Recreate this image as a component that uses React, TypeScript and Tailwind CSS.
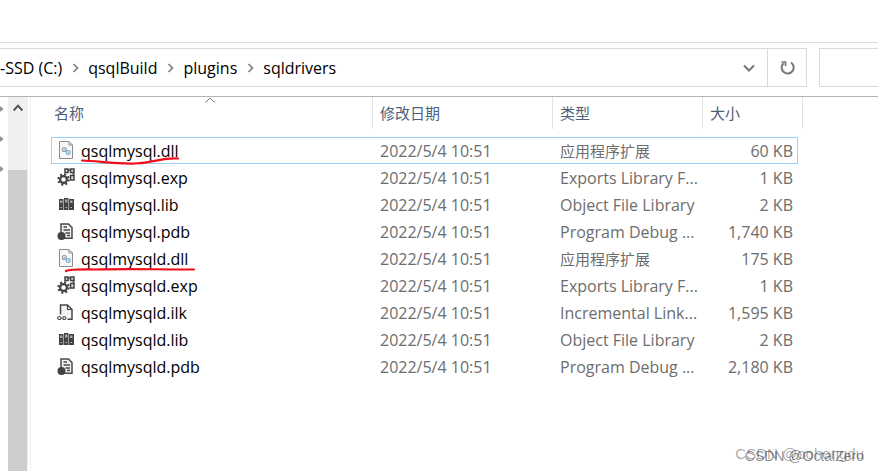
import React from 'react'

type FileKind = 'dll' | 'exp' | 'lib' | 'pdb' | 'ilk'

interface FileEntry {
  name: string
  kind: FileKind
  type: string
  size: string
  selected?: boolean
  mark?: string
}

const MODIFIED = '2022/5/4 10:51'

const files: FileEntry[] = [
  { name: 'qsqlmysql.dll', kind: 'dll', type: '应用程序扩展', size: '60 KB', selected: true, mark: 'M31 23.5C48 24 62 27 84 26.5C104 26 109 20.500 127 21.500' },
  { name: 'qsqlmysql.exp', kind: 'exp', type: 'Exports Library F...', size: '1 KB' },
  { name: 'qsqlmysql.lib', kind: 'lib', type: 'Object File Library', size: '2 KB' },
  { name: 'qsqlmysql.pdb', kind: 'pdb', type: 'Program Debug ...', size: '1,740 KB' },
  { name: 'qsqlmysqld.dll', kind: 'dll', type: '应用程序扩展', size: '175 KB', mark: 'M15 26C19 24 30 24.500 45 24.500C80 23.500 100 24.500 143 24.500' },
  { name: 'qsqlmysqld.exp', kind: 'exp', type: 'Exports Library F...', size: '1 KB' },
  { name: 'qsqlmysqld.ilk', kind: 'ilk', type: 'Incremental Link...', size: '1,595 KB' },
  { name: 'qsqlmysqld.lib', kind: 'lib', type: 'Object File Library', size: '2 KB' },
  { name: 'qsqlmysqld.pdb', kind: 'pdb', type: 'Program Debug ...', size: '2,180 KB' },
]

const crumbs = ['-SSD (C:)', 'qsqlBuild', 'plugins', 'sqldrivers']

export default function App() {
  return (
    <div className="relative flex h-screen flex-col overflow-hidden bg-white font-['Open_Sans','Noto_Sans_CJK_SC',sans-serif] text-base leading-5 text-black">
      <div className="h-[42px] shrink-0" />

      {/* Address bar */}
      <header className="flex h-[55px] shrink-0 gap-3 border-t border-b border-t-[#dcdcdc] border-b-[#b4b4b4] pt-[5px] pb-[9px]">
        <div className="flex min-w-0 flex-1 border-y border-r border-[#d9d9d9]">
          <nav className="flex min-w-0 flex-1 items-center">
            {crumbs.map((crumb, i) => (
              <React.Fragment key={crumb}>
                {i > 0 && (
                  <svg viewBox="0 0 7 10" className="mr-[9px] ml-[10px] h-[10px] w-[7px]" fill="none" stroke="#808080" strokeWidth="1.7">
                    <path d="M1.500 1L5.500 5L1.500 9" />
                  </svg>
                )}
                <a href="#" className="whitespace-nowrap">{crumb}</a>
              </React.Fragment>
            ))}
          </nav>
          <button aria-label="历史记录" className="flex w-[37px] items-center justify-center">
            <svg viewBox="0 0 12 8" className="h-2 w-3" fill="none" stroke="#777" strokeWidth="2">
              <path d="M1 1.500L6 6.500L11 1.500" />
            </svg>
          </button>
          <button aria-label="刷新" className="flex w-[39px] items-center justify-center border-l border-[#d9d9d9]">
            <svg viewBox="0 0 16 16" className="h-4 w-4" fill="none" stroke="#777" strokeWidth="2">
              <path d="M12 2.500A6 6 0 1 1 4.500 3.200" />
              <path d="M2.500 2H6.500V6" strokeWidth="1.700" />
            </svg>
          </button>
        </div>
        <input aria-label="搜索" className="w-[59px] border-y border-l border-[#d9d9d9] outline-none" />
      </header>

      <main className="flex min-h-0 flex-1">
        {/* Navigation pane edge */}
        <aside className="flex w-[31px] shrink-0 border-r border-[#f0f0f0]">
          <div className="flex w-2 flex-col gap-[22px] pt-2">
            <PinTip />
            <PinTip />
            <PinTip />
          </div>
          <div className="flex w-5 flex-col bg-[#f0f0f0]">
            <button aria-label="向上滚动" className="flex h-[73px] shrink-0 justify-center pt-[7px]">
              <svg viewBox="0 0 10 8" className="h-2 w-[10px]" fill="none" stroke="#505050" strokeWidth="1.900">
                <path d="M.7 6.500L5 1.700L9.300 6.500" />
              </svg>
            </button>
            <div className="mr-px flex-1 bg-[#cdcdcd]" />
          </div>
        </aside>

        <section className="min-w-0 flex-1 pl-5">
          <table className="w-[752px] table-fixed border-collapse text-left">
            <colgroup>
              <col />
              <col className="w-[180px]" />
              <col className="w-[150px]" />
              <col className="w-[100px]" />
            </colgroup>
            <thead>
              <tr className="h-10 align-top">
                <HeaderCell label="名称" sorted />
                <HeaderCell label="修改日期" />
                <HeaderCell label="类型" />
                <HeaderCell label="大小" />
              </tr>
            </thead>
            <tbody>
              {files.map((file) => (
                <FileRow key={file.name} file={file} />
              ))}
            </tbody>
          </table>
        </section>
      </main>

      {/* Watermarks */}
      <span className="absolute right-[14px] bottom-[7px] font-['Liberation_Sans',sans-serif] text-[15px] text-black/35">CSDN @oohongdu</span>
      <span className="absolute right-[14px] bottom-[5px] font-['Liberation_Sans',sans-serif] text-sm text-black/45">CSDN @OctalZero</span>
    </div>
  )
}

function HeaderCell({ label, sorted }: { label: string; sorted?: boolean }) {
  return (
    <th className="p-0 font-normal">
      <div className={`relative flex h-8 items-center border-r border-[#e2e2e2] text-[15px] text-[#4c607a] ${sorted ? 'pl-[3px]' : 'pl-[7px]'}`}>
        {label}
        {sorted && (
          <svg viewBox="0 0 10 6" className="absolute top-0 right-1 left-0 mx-auto h-[6px] w-[10px]" fill="none" stroke="#777">
            <path d="M.5 5.500L5 1L9.500 5.500" />
          </svg>
        )}
      </div>
    </th>
  )
}

function FileRow({ file }: { file: FileEntry }) {
  const localized = file.kind === 'dll'

  return (
    <tr className="relative h-[27px] text-[#6d6d6d]">
      <td className="p-0">
        {file.selected && <span className="absolute inset-y-0 right-[5px] left-0 ring-1 ring-[#99d1ff] ring-inset" />}
        <div className="flex items-center gap-[6px] pl-[6px] text-black">
          <FileIcon kind={file.kind} />
          <span>{file.name}</span>
        </div>
        {file.mark && (
          <svg viewBox="0 0 150 30" className="absolute top-0 left-0 z-10 h-[30px] w-[150px]" fill="none" stroke="#f00c18" strokeWidth="2.200" strokeLinecap="round">
            <path d={file.mark} />
          </svg>
        )}
      </td>
      <td className="p-0 pl-[7px]">{MODIFIED}</td>
      <td className={`p-0 pl-[7px] whitespace-nowrap ${localized ? 'text-[15px]' : ''}`}>{file.type}</td>
      <td className="p-0 pr-[10px] text-right whitespace-nowrap">{file.size}</td>
    </tr>
  )
}

function PinTip() {
  return (
    <svg viewBox="0 0 4 8" className="h-2 w-1 shrink-0" fill="#8b969f">
      <path d="M0 1.500L1 1.500L3.500 4L1 6.500L0 6.500Z" />
    </svg>
  )
}

function FileIcon({ kind }: { kind: FileKind }) {
  return (
    <svg viewBox="0 0 18 20" className="h-5 w-[18px] shrink-0" fill="none">
      {kind === 'dll' && (
        <>
          <path d="M2.500 .5H12L15.500 4V17.500H2.500Z" fill="#f7f7f7" stroke="#8c8c8c" />
          <path d="M12 .5V4H15.500" stroke="#8c8c8c" />
          <circle cx="7.300" cy="8.500" r="2" stroke="#8b98a2" strokeWidth="1.100" />
          <circle cx="7.300" cy="8.500" r=".7" fill="#8b98a2" />
          <circle cx="11.300" cy="11.500" r="1.900" stroke="#75afd0" strokeWidth="1.200" />
          <circle cx="11.300" cy="11.500" r=".6" fill="#75afd0" />
        </>
      )}
      {kind === 'exp' && (
        <>
          <circle cx="6.500" cy="11.500" r="3.400" stroke="#424242" strokeWidth="2.200" />
          <circle cx="6.500" cy="11.500" r="5.200" stroke="#424242" strokeWidth="2" strokeDasharray="2.040 2.040" />
          <path d="M8 1H11V4.500H8ZM13.500 1H17V4.500H13.500ZM13.500 7.500H17V12H13.500Z" fill="#ddd" stroke="#424242" strokeWidth="1.500" />
          <path d="M11 2H13.500M16.500 4.500V7.500" stroke="#424242" strokeWidth="1.600" />
        </>
      )}
      {kind === 'lib' && (
        <>
          <path d="M2 4H6.500V15H2ZM7 3H11.500V15H7ZM12 4H17V15H12Z" fill="#424242" />
          <path d="M3 5.500H5.500V8H3ZM8 4.500H10.500V7.500H8ZM13 5.500H15.500V8H13Z" fill="#a5a5a5" />
          <path d="M3.500 12.500H5M8.500 12.500H10M13.500 12.500H15" stroke="#bbb" />
        </>
      )}
      {kind === 'pdb' && (
        <>
          <path d="M4 2H11.500L15 5.500V16.200H4Z" fill="#f2f2f2" stroke="#484848" strokeWidth="1.500" />
          <path d="M6.500 5H10M6.500 8H13M8.500 11H13M10 13.500H13" stroke="#484848" strokeWidth="1.300" />
          <circle cx="4.500" cy="14" r="4" fill="#424242" />
        </>
      )}
      {kind === 'ilk' && (
        <>
          <path d="M3.500 11.500V2H10.500L15 6.500V16.200H10.500" fill="#f3f3f7" stroke="#484848" strokeWidth="1.500" />
          <path d="M10.500 2V6.500H15" stroke="#484848" strokeWidth="1.200" />
          <path d="M3.800 13.700H2A1.300 1.300 0 0 0 2 16.500H3.800M5.800 13.700H7.500A1.300 1.300 0 0 1 7.500 16.500H5.800M3 15.100H6.700" stroke="#424242" strokeWidth="1.100" />
        </>
      )}
    </svg>
  )
}
